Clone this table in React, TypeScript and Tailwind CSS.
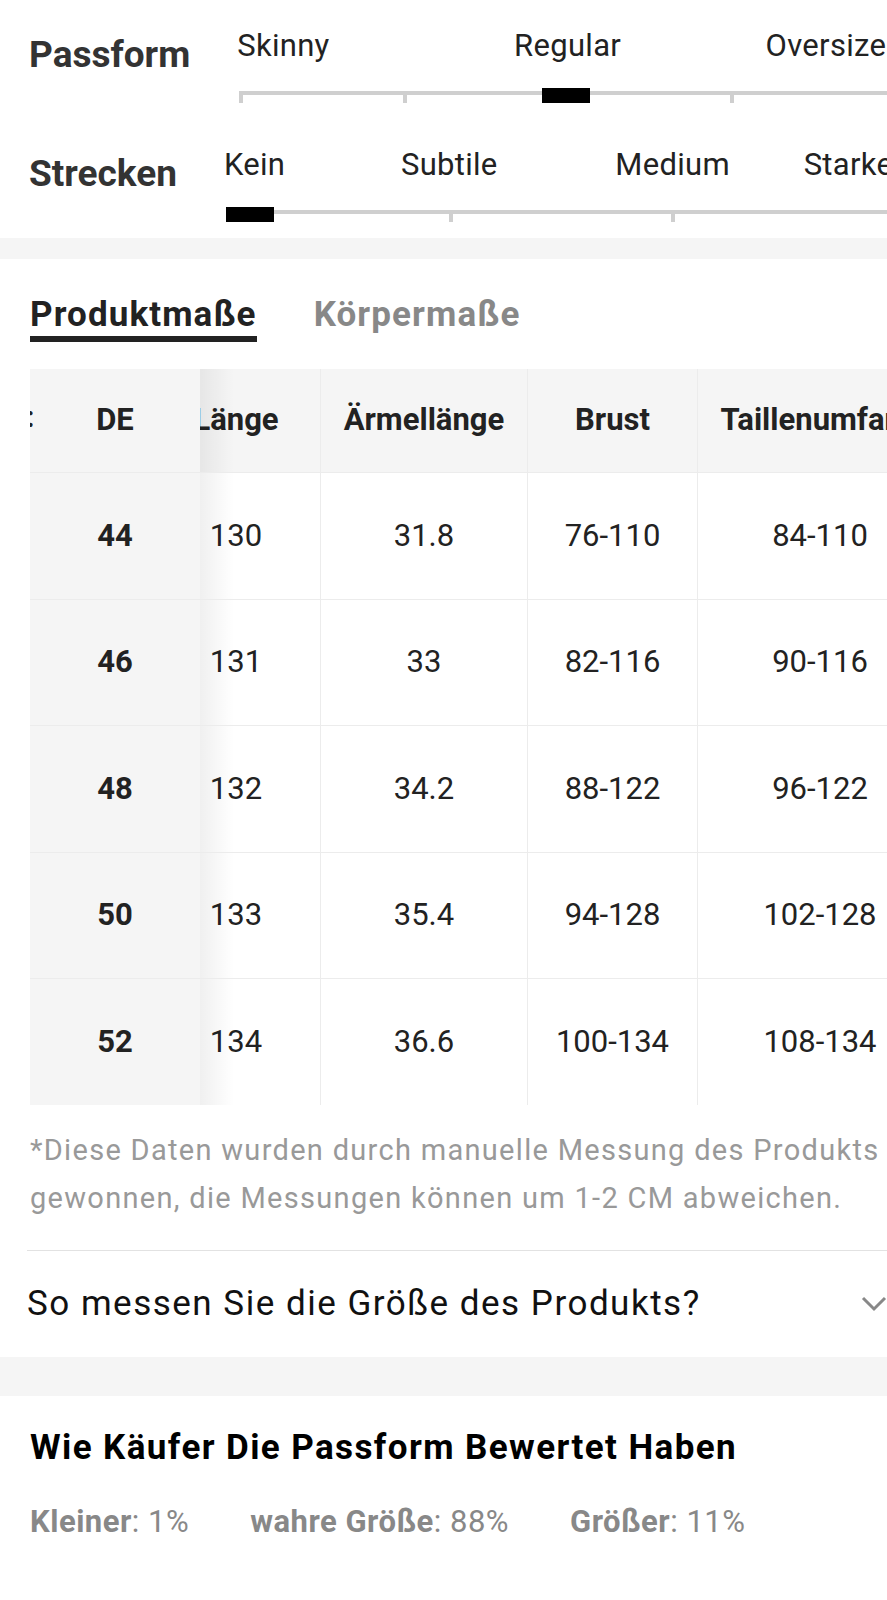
import React from "react";

type Scale = {
  title: string;
  ticks: number;
  active: number;
  labels: { text: string; at: number }[];
};

const scales: Scale[] = [
  {
    title: "Passform",
    ticks: 5,
    active: 2,
    labels: [
      { text: "Skinny", at: 0 },
      { text: "Regular", at: 2 },
      { text: "Oversized", at: 4 },
    ],
  },
  {
    title: "Strecken",
    ticks: 4,
    active: 0,
    labels: [
      { text: "Kein", at: 0 },
      { text: "Subtile", at: 1 },
      { text: "Medium", at: 2 },
      { text: "Starker", at: 3 },
    ],
  },
];

const headers = ["Länge", "Ärmellänge", "Brust", "Taillenumfang"];
const colWidths = ["w-[169px]", "w-[207px]", "w-[170px]", "w-[245px]"];

const rows = [
  { size: "44", h: "h-[127px]", values: ["130", "31.8", "76-110", "84-110"] },
  { size: "46", h: "h-[126px]", values: ["131", "33", "82-116", "90-116"] },
  { size: "48", h: "h-[127px]", values: ["132", "34.2", "88-122", "96-122"] },
  { size: "50", h: "h-[126px]", values: ["133", "35.4", "94-128", "102-128"] },
  { size: "52", h: "h-[127px]", values: ["134", "36.6", "100-134", "108-134"] },
];

const stats = [
  { label: "Kleiner", value: "1%" },
  { label: "wahre Größe", value: "88%" },
  { label: "Größer", value: "11%" },
];

// position along the track, leaving room for the 4px tick
const tickLeft = (i: number, n: number) => `calc((100% - 4px) * ${i / (n - 1)})`;
const tickCenter = (i: number, n: number) => `calc((100% - 4px) * ${i / (n - 1)} + 2px)`;

const ScaleRow: React.FC<{ scale: Scale }> = ({ scale }) => {
  const { ticks, active, labels } = scale;
  return (
    <div className="flex gap-[49px]">
      <div className="mt-[6px] shrink-0 text-[37px] leading-[42px] font-bold text-[#333]">
        {scale.title}
      </div>
      <div className="flex-1">
        <div className="relative -ml-[2px] h-[36px] text-[31px] leading-[36px] tracking-[0.3px] text-[#222]">
          {labels.map((l) => {
            if (l.at === 0) {
              return (
                <span key={l.text} className="absolute left-0 top-0 whitespace-nowrap">
                  {l.text}
                </span>
              );
            }
            if (l.at === ticks - 1) {
              return (
                <span key={l.text} className="absolute right-[-6px] top-0 whitespace-nowrap">
                  {l.text}
                </span>
              );
            }
            return (
              <span
                key={l.text}
                className="absolute top-0 -translate-x-1/2 whitespace-nowrap"
                style={{ left: tickCenter(l.at, ticks) }}
              >
                {l.text}
              </span>
            );
          })}
        </div>
        <div className="relative mt-[24px] h-[15px]">
          <div className="absolute left-0 right-0 top-[3px] h-[4px] bg-[#cfcfcf]" />
          {Array.from({ length: ticks }).map((_, i) => (
            <div
              key={i}
              className="absolute top-[3px] h-[12px] w-[4px] bg-[#cfcfcf]"
              style={{ left: tickLeft(i, ticks) }}
            />
          ))}
          <div
            className="absolute top-0 h-[15px] w-[48px] bg-black"
            style={{
              left: active === 0 ? "0px" : `calc((100% - 4px) * ${active / (ticks - 1)} - 25px)`,
            }}
          />
        </div>
      </div>
    </div>
  );
};

const App: React.FC = () => {
  return (
    <div className="w-[887px] min-h-[1600px] overflow-hidden bg-white font-['Roboto',sans-serif]">
      {/* fit scales */}
      <div className="w-[898px] pt-[28px] pb-[16px] pl-[29px] space-y-[44px]">
        {scales.map((s) => (
          <ScaleRow key={s.title} scale={s} />
        ))}
      </div>

      <div className="h-[21px] bg-[#f5f5f5]" />

      {/* size table */}
      <div className="pt-[36px]">
        <div className="flex gap-[57px] pl-[30px] text-[35px] leading-[39px] font-bold tracking-[1.1px]">
          <div>
            <div className="text-[#222]">Produktmaße</div>
            <div className="mt-[2px] h-[6px] bg-[#222]" />
          </div>
          <div className="text-[#888]">Körpermaße</div>
        </div>

        <div className="mt-[27px] ml-[30px] text-[31px] text-[#222]">
          <div className="flex h-[103px] bg-[#f5f5f5] font-bold">
            <div className="relative z-10 flex w-[170px] shrink-0 items-center justify-center bg-[#f5f5f5]">
              <div className="absolute left-0 top-[30px] w-[3px] overflow-hidden">
                <span className="-ml-[4px] block text-[30px] leading-[36px]">:</span>
              </div>
              DE
              <div className="absolute left-full top-0 h-full w-[34px] bg-linear-to-r from-black/[0.06] to-transparent" />
            </div>
            <div className="-ml-[49px] flex shrink-0">
              {headers.map((h, i) => (
                <div
                  key={h}
                  className={`${colWidths[i]} flex shrink-0 items-center justify-center border-l border-[#ececec] whitespace-nowrap`}
                >
                  {h}
                </div>
              ))}
            </div>
          </div>
          {rows.map((r) => (
            <div key={r.size} className={`flex ${r.h} border-t border-[#ececec]`}>
              <div className="relative z-10 flex w-[170px] shrink-0 items-center justify-center bg-[#f5f5f5] font-bold">
                {r.size}
                <div className="absolute left-full top-0 h-full w-[34px] bg-linear-to-r from-black/[0.06] to-transparent" />
              </div>
              <div className="-ml-[49px] flex shrink-0">
                {r.values.map((v, i) => (
                  <div
                    key={i}
                    className={`${colWidths[i]} flex shrink-0 items-center justify-center border-l border-[#ececec] bg-white`}
                  >
                    {v}
                  </div>
                ))}
              </div>
            </div>
          ))}
        </div>

        <p className="mt-[21px] w-[885px] pl-[30px] text-[29px] leading-[48px] tracking-[1.3px] text-[#999]">
          *Diese Daten wurden durch manuelle Messung des Produkts gewonnen, die Messungen können um 1-2 CM abweichen.
        </p>

        <div className="mt-[28px] ml-[27px] h-px bg-[#e2e2e2]" />
        <div className="flex h-[106px] items-center justify-between pl-[27px]">
          <span className="text-[35px] tracking-[1.5px] text-[#111]">So messen Sie die Größe des Produkts?</span>
          <svg width="26" height="16" viewBox="0 0 26 16">
            <path d="M2 2 L13 13 L24 2" fill="none" stroke="#888" strokeWidth="3" />
          </svg>
        </div>
      </div>

      <div className="h-[39px] bg-[#f5f5f5]" />

      {/* fit feedback */}
      <div className="pt-[32px] pl-[30px]">
        <h2 className="text-[35px] leading-[40px] font-bold tracking-[1.4px] text-black">
          Wie Käufer Die Passform Bewertet Haben
        </h2>
        <div className="mt-[36px] flex gap-[61px] text-[31px] leading-[36px] tracking-[0.5px] text-[#888]">
          {stats.map((s) => (
            <span key={s.label}>
              <span className="font-bold">{s.label}</span>: {s.value}
            </span>
          ))}
        </div>
      </div>
    </div>
  );
};

export default App;
